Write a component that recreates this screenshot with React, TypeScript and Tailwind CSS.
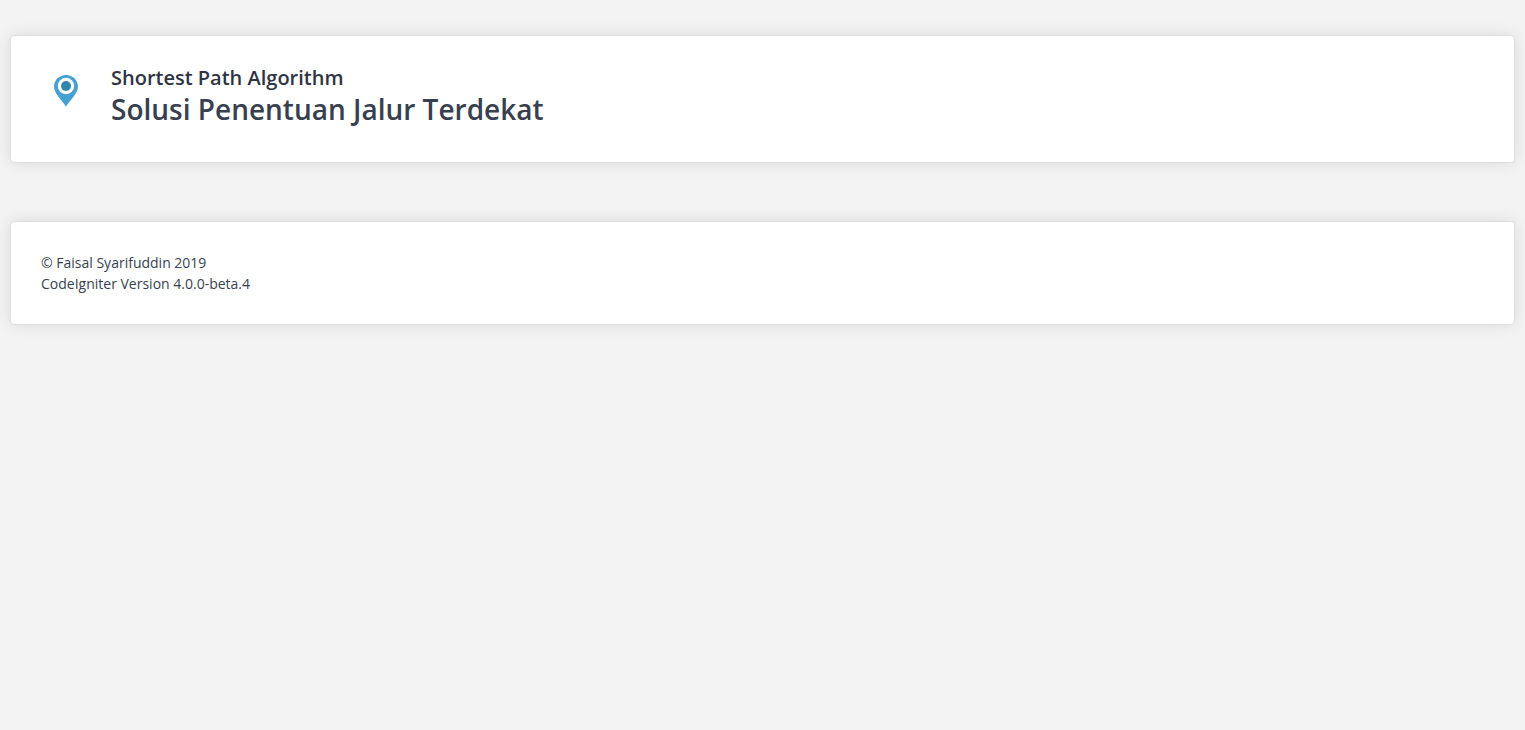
import type { ReactNode } from "react";

function Card({ children }: { children: ReactNode }) {
  return (
    <div className="rounded border border-[#dfdfdf] bg-white p-[30px] shadow-[0_0_15px_rgba(0,0,0,0.1)]">
      {children}
    </div>
  );
}

function MapPin() {
  return (
    <svg viewBox="0 0 24 33" className="h-[33px] w-6" aria-hidden="true">
      <path d="M12 1C5.400 1 0 6 0 12.500c0 6.800 7.500 13 12 20.300 4.500-7.300 12-13.500 12-20.300C24 6 18.600 1 12 1z" fill="#45a1d4" />
      <circle cx="12" cy="12" r="8.200" fill="#fff" />
      <circle cx="12" cy="12" r="5" fill="#3187ab" />
    </svg>
  );
}

export default function App() {
  return (
    <div className="flex min-h-screen flex-col gap-[58px] bg-[#f3f3f3] px-[10px] pt-[35px] font-['Open_Sans',sans-serif] text-[#373f50]">
      <header>
        <Card>
          <div className="flex items-start gap-8 pb-1 pl-[13px]">
            <div className="pt-2">
              <MapPin />
            </div>
            <div className="pl-px font-semibold">
              <h2 className="text-xl leading-6 text-[#2e3444]">Shortest Path Algorithm</h2>
              <h1 className="text-[28px] leading-[38px]">Solusi Penentuan Jalur Terdekat</h1>
            </div>
          </div>
        </Card>
      </header>
      <footer>
        <Card>
          <p className="text-sm leading-[21px]">© Faisal Syarifuddin 2019</p>
          <p className="text-sm leading-[21px]">CodeIgniter Version 4.0.0-beta.4</p>
        </Card>
      </footer>
    </div>
  );
}
